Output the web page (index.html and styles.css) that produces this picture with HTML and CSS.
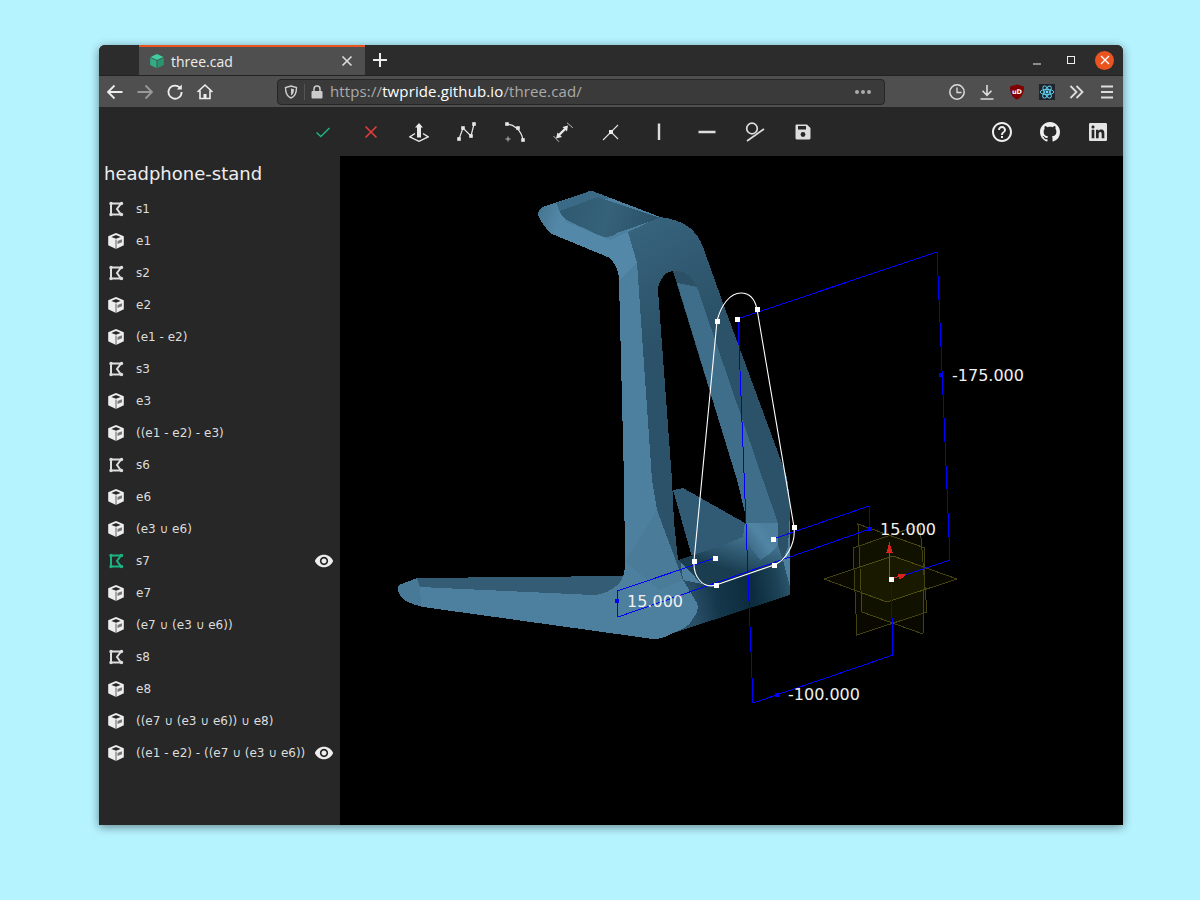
FILE: index.html
```html
<!DOCTYPE html>
<html lang="en">
<head>
<meta charset="utf-8">
<title>three.cad</title>
<link rel="stylesheet" href="styles.css">
</head>
<body>
<svg class="defs" width="0" height="0" aria-hidden="true">
  <symbol id="i-sketch" viewBox="0 0 16 16">
    <path d="M3 2.500H13L9 8L13 13.500H3Z" fill="none" stroke="currentColor" stroke-width="2"/>
    <g fill="currentColor"><circle cx="3" cy="2.500" r="1.700"/><circle cx="13.500" cy="2.500" r="1.700"/><circle cx="3" cy="13.500" r="1.700"/><circle cx="13.500" cy="13.500" r="1.700"/></g>
  </symbol>
  <symbol id="i-cube" viewBox="0 0 16 16">
    <path d="M8 0L15.800 3.200V12.300L8 16L.2 12.300V3.200Z" fill="#eee"/>
    <path d="M8 2L12.600 3.900L8 5.800L3.400 3.900Z" fill="#272727"/>
    <path d="M9.500 8L14 6.200V9.200L9.500 11Z" fill="#272727" opacity=".6"/>
    <path d="M8 6.600V16" stroke="#272727" stroke-width=".7"/>
  </symbol>
  <symbol id="i-eye" viewBox="0 0 24 24">
    <path fill="currentColor" d="M12 4.500C7 4.500 2.730 7.610 1 12c1.730 4.390 6 7.500 11 7.500s9.270-3.110 11-7.500c-1.730-4.390-6-7.500-11-7.500zM12 17c-2.760 0-5-2.240-5-5s2.240-5 5-5 5 2.240 5 5-2.240 5-5 5zm0-8c-1.660 0-3 1.340-3 3s1.340 3 3 3 3-1.340 3-3-1.340-3-3-3z"/>
  </symbol>
</svg>

<div class="window">
  <div class="titlebar">
    <div class="tab">
      <svg class="tab-icon" viewBox="0 0 14 14" width="14" height="14"><path d="M7 0L13.500 3L7 6L.5 3Z" fill="#3ccf9f"/><path d="M.2 3.800L6.500 6.800V14L.2 11Z" fill="#2fae86"/><path d="M13.800 3.800L7.500 6.800V14L13.800 11Z" fill="#27966f"/></svg>
      <span class="tab-title">three.cad</span>
      <svg class="tab-close" viewBox="0 0 12 12" width="12" height="12"><path d="M1.500 1.500L10.500 10.500M10.500 1.500L1.500 10.500" stroke="#ddd" stroke-width="1.600"/></svg>
    </div>
    <svg class="new-tab" viewBox="0 0 14 14" width="14" height="14"><path d="M7 0V14M0 7H14" stroke="#eee" stroke-width="2"/></svg>
    <div class="win-controls">
      <svg viewBox="0 0 10 10" width="10" height="10"><path d="M1 9H9" stroke="#eee" stroke-width="1"/></svg>
      <svg viewBox="0 0 10 10" width="10" height="10"><rect x="1.500" y="1.500" width="7" height="7" fill="none" stroke="#eee" stroke-width="1"/></svg>
      <span class="win-close"><svg viewBox="0 0 10 10" width="10" height="10"><path d="M1 1L9 9M9 1L1 9" stroke="#fff" stroke-width="1.300"/></svg></span>
    </div>
  </div>

  <div class="navbar">
    <div class="nav-left">
      <svg viewBox="0 0 18 18" width="18" height="18"><path d="M16.500 9H2.500M8.500 2.500L2 9L8.500 15.500" fill="none" stroke="#eee" stroke-width="1.800"/></svg>
      <svg viewBox="0 0 18 18" width="18" height="18"><path d="M1.500 9H15.500M9.500 2.500L16 9L9.500 15.500" fill="none" stroke="#999" stroke-width="1.800"/></svg>
      <svg viewBox="0 0 18 18" width="18" height="18"><path d="M14.300 5.200A6.600 6.600 0 1 0 15.600 9" fill="none" stroke="#eee" stroke-width="1.800"/><path d="M15.800 1.600V6.600H10.800Z" fill="#eee"/></svg>
      <svg viewBox="0 0 18 18" width="18" height="18"><path d="M1.500 9L9 2L16.500 9M4 7.500V15.500H14V7.500" fill="none" stroke="#eee" stroke-width="1.600"/><path d="M7.500 15.500V11H10.500V15.500Z" fill="#eee"/></svg>
    </div>
    <div class="urlbar">
      <svg class="shield" viewBox="0 0 14 14" width="14" height="14"><path d="M7 1L12.500 2.500C12.500 8 11 11.500 7 13C3 11.500 1.500 8 1.500 2.500Z" fill="none" stroke="#ccc" stroke-width="1.400"/><path d="M7 3.500L10 4.300C10 7.500 9 9.500 7 10.500Z" fill="#ccc"/></svg>
      <span class="url-sep"></span>
      <svg class="lock" viewBox="0 0 12 14" width="12" height="14"><path d="M3 6.500V4A3 3 0 0 1 9 4V6.500" fill="none" stroke="#ccc" stroke-width="1.500"/><rect x="0.5" y="6" width="11" height="7.500" rx="1" fill="#ccc"/></svg>
      <span class="url"><span class="dim">https://</span><span class="host">twpride.github.io</span><span class="dim">/three.cad/</span></span>
      <span class="url-dots"><i></i><i></i><i></i></span>
    </div>
    <div class="nav-right">
      <svg viewBox="0 0 18 18" width="18" height="18"><circle cx="9" cy="9" r="7.200" fill="none" stroke="#ddd" stroke-width="1.500"/><path d="M9 4.500V9.500H13.500" fill="none" stroke="#ddd" stroke-width="1.300"/></svg>
      <svg viewBox="0 0 18 18" width="18" height="18"><path d="M9 2V12M4.500 7.800L9 12.300L13.500 7.800M2.500 16H15.500" fill="none" stroke="#ddd" stroke-width="1.600"/></svg>
      <svg viewBox="0 0 18 18" width="18" height="18"><path d="M9 1.500L16 3.500C16 10 14 14.500 9 16.500C4 14.500 2 10 2 3.500Z" fill="#800000"/><text class="ub" x="9" y="10.500" text-anchor="middle">uD</text></svg>
      <svg viewBox="0 0 18 18" width="18" height="18"><rect width="16" height="16" x="1" y="1" fill="#20232a"/><g fill="none" stroke="#61dafb" stroke-width=".9"><ellipse cx="9" cy="9" rx="6.800" ry="2.600"/><ellipse cx="9" cy="9" rx="6.800" ry="2.600" transform="rotate(60 9 9)"/><ellipse cx="9" cy="9" rx="6.800" ry="2.600" transform="rotate(120 9 9)"/></g><circle cx="9" cy="9" r="1.400" fill="#61dafb"/></svg>
      <svg viewBox="0 0 18 18" width="18" height="18"><path d="M2.500 3L8.500 9L2.500 15M8.500 3L14.500 9L8.500 15" fill="none" stroke="#ddd" stroke-width="1.800"/></svg>
      <svg viewBox="0 0 18 18" width="18" height="18"><path d="M3 3.500H15M3 9H15M3 14.500H15" stroke="#ddd" stroke-width="1.800"/></svg>
    </div>
  </div>

  <div class="toolbar">
    <div class="tools">
      <svg viewBox="0 0 20 20" width="20" height="20"><path d="M3.500 10.500L7.800 14.500L16.500 6" fill="none" stroke="#19b482" stroke-width="1.500"/></svg>
      <svg viewBox="0 0 20 20" width="20" height="20"><path d="M4.500 4.500L15.500 15.500M15.500 4.500L4.500 15.500" stroke="#e23d3d" stroke-width="1.600"/></svg>
      <svg viewBox="0 0 20 20" width="20" height="20"><path d="M10 1L14 5.500H12V15.500H8V5.500H6Z" fill="#e8e8e8"/><path d="M6 11.500L.8 14.800L10 19.300L19.200 14.800L14 11.500" fill="none" stroke="#e8e8e8" stroke-width="1.400"/></svg>
      <svg viewBox="0 0 20 20" width="20" height="20"><path d="M2 17L6 6L14 14L17 2" fill="none" stroke="#e8e8e8" stroke-width="1.200"/><g fill="#e8e8e8"><rect x=".2" y="15.200" width="3.600" height="3.600"/><rect x="4.200" y="4.200" width="3.600" height="3.600"/><rect x="12.200" y="12.200" width="3.600" height="3.600"/><rect x="15.200" y=".2" width="3.600" height="3.600"/></g></svg>
      <svg viewBox="0 0 20 20" width="20" height="20"><path d="M2 2C8 2.500 16 7 18 18" fill="none" stroke="#e8e8e8" stroke-width="1.200"/><g fill="#e8e8e8"><rect x=".2" y=".2" width="3.600" height="3.600"/><rect x="11.200" y="4.200" width="3.600" height="3.600"/><rect x="16.200" y="16.200" width="3.600" height="3.600"/></g><path d="M3 14.500V19.500M.5 17H5.500" stroke="#bbb" stroke-width="1"/></svg>
      <svg viewBox="0 0 20 20" width="20" height="20"><path d="M6 13L12 7" stroke="#e8e8e8" stroke-width="2.400"/><path d="M3 16.500L4.500 10.500L9 15ZM15 3.500L9.500 5L14 9.500Z" fill="#e8e8e8"/><path d="M.5 14L6 19.800M14 .8L19.800 5.800" stroke="#bbb" stroke-width="1"/></svg>
      <svg viewBox="0 0 20 20" width="20" height="20"><path d="M2 18L17 3M10 10L17 17" fill="none" stroke="#e0e0e0" stroke-width="1.100"/><rect x="8" y="8" width="4" height="4" fill="#eee"/></svg>
      <svg viewBox="0 0 20 20" width="20" height="20"><path d="M10 1.500V18" stroke="#ddd" stroke-width="2.400"/></svg>
      <svg viewBox="0 0 20 20" width="20" height="20"><path d="M1.500 10H18.500" stroke="#ddd" stroke-width="2.400"/></svg>
      <svg viewBox="0 0 22 20" width="22" height="20"><circle cx="8" cy="6.500" r="5.300" fill="none" stroke="#ddd" stroke-width="1.700"/><path d="M3 19L20 7" stroke="#ddd" stroke-width="1.700"/></svg>
      <svg viewBox="0 0 18 18" width="18" height="18"><path d="M2.500 1.500H13L16.500 5V15A1.500 1.500 0 0 1 15 16.500H3A1.500 1.500 0 0 1 1.500 15V2.500A1 1 0 0 1 2.500 1.500Z" fill="#ddd"/><rect x="4" y="3" width="8" height="3.500" fill="#272727"/><circle cx="9" cy="11.500" r="2.400" fill="#272727"/></svg>
    </div>
    <div class="links">
      <svg viewBox="0 0 24 24" width="24" height="24"><path fill="#eee" d="M11 18h2v-2h-2v2zm1-16C6.480 2 2 6.480 2 12s4.480 10 10 10 10-4.480 10-10S17.520 2 12 2zm0 18c-4.410 0-8-3.590-8-8s3.590-8 8-8 8 3.590 8 8-3.590 8-8 8zm0-14c-2.210 0-4 1.790-4 4h2c0-1.100.9-2 2-2s2 .9 2 2c0 2-3 1.750-3 5h2c0-2.250 3-2.500 3-5 0-2.210-1.790-4-4-4z"/></svg>
      <svg viewBox="0 0 16 16" width="20" height="20"><path fill="#eee" d="M8 0C3.580 0 0 3.580 0 8c0 3.540 2.290 6.530 5.470 7.590.4.070.55-.17.55-.38 0-.19-.01-.82-.01-1.490-2.010.37-2.530-.49-2.690-.94-.09-.23-.48-.94-.82-1.130-.28-.15-.68-.52-.01-.53.63-.01 1.080.58 1.230.82.72 1.210 1.870.87 2.330.66.07-.52.28-.87.51-1.070-1.780-.2-3.640-.89-3.640-3.950 0-.87.31-1.590.82-2.150-.08-.2-.36-1.020.08-2.120 0 0 .67-.21 2.200.82.64-.18 1.320-.27 2-.27.68 0 1.360.09 2 .27 1.530-1.040 2.200-.82 2.200-.82.44 1.100.16 1.920.08 2.120.51.56.82 1.270.82 2.150 0 3.070-1.870 3.750-3.650 3.950.29.25.54.73.54 1.480 0 1.070-.01 1.930-.01 2.200 0 .21.15.46.55.38A8.013 8.013 0 0016 8c0-4.420-3.580-8-8-8z"/></svg>
      <svg viewBox="0 0 24 24" width="18" height="18"><path fill="#e4e4e4" d="M20.447 20.452h-3.554v-5.569c0-1.328-.027-3.037-1.852-3.037-1.853 0-2.136 1.445-2.136 2.939v5.667H9.351V9h3.414v1.561h.046c.477-.9 1.637-1.850 3.370-1.850 3.601 0 4.267 2.370 4.267 5.455v6.286zM5.337 7.433c-1.144 0-2.063-.926-2.063-2.065 0-1.138.92-2.063 2.063-2.063 1.140 0 2.064.925 2.064 2.063 0 1.139-.925 2.065-2.064 2.065zm1.782 13.019H3.555V9h3.564v11.452zM22.225 0H1.771C.792 0 0 .774 0 1.729v20.542C0 23.227.792 24 1.771 24h20.451C23.200 24 24 23.227 24 22.271V1.729C24 .774 23.200 0 22.222 0h.003z"/></svg>
    </div>
  </div>

  <div class="main">
    <aside class="sidebar">
      <div class="project">headphone-stand</div>
      <ul class="tree">
        <li><svg class="ico"><use href="#i-sketch"/></svg><span>s1</span></li>
        <li><svg class="ico"><use href="#i-cube"/></svg><span>e1</span></li>
        <li><svg class="ico"><use href="#i-sketch"/></svg><span>s2</span></li>
        <li><svg class="ico"><use href="#i-cube"/></svg><span>e2</span></li>
        <li><svg class="ico"><use href="#i-cube"/></svg><span>(e1 - e2)</span></li>
        <li><svg class="ico"><use href="#i-sketch"/></svg><span>s3</span></li>
        <li><svg class="ico"><use href="#i-cube"/></svg><span>e3</span></li>
        <li><svg class="ico"><use href="#i-cube"/></svg><span>((e1 - e2) - e3)</span></li>
        <li><svg class="ico"><use href="#i-sketch"/></svg><span>s6</span></li>
        <li><svg class="ico"><use href="#i-cube"/></svg><span>e6</span></li>
        <li><svg class="ico"><use href="#i-cube"/></svg><span>(e3 ∪ e6)</span></li>
        <li><svg class="ico active"><use href="#i-sketch"/></svg><span>s7</span><svg class="eye"><use href="#i-eye"/></svg></li>
        <li><svg class="ico"><use href="#i-cube"/></svg><span>e7</span></li>
        <li><svg class="ico"><use href="#i-cube"/></svg><span>(e7 ∪ (e3 ∪ e6))</span></li>
        <li><svg class="ico"><use href="#i-sketch"/></svg><span>s8</span></li>
        <li><svg class="ico"><use href="#i-cube"/></svg><span>e8</span></li>
        <li><svg class="ico"><use href="#i-cube"/></svg><span>((e7 ∪ (e3 ∪ e6)) ∪ e8)</span></li>
        <li><svg class="ico"><use href="#i-cube"/></svg><span>((e1 - e2) - ((e7 ∪ (e3 ∪ e6))</span><svg class="eye"><use href="#i-eye"/></svg></li>
      </ul>
    </aside>

    <div class="viewport">
      <svg class="scene" viewBox="340 156 782 669" width="782" height="669">
        <defs>
          <linearGradient id="g-side" x1="690" y1="600" x2="792" y2="580" gradientUnits="userSpaceOnUse">
            <stop offset="0" stop-color="#2a5068"/><stop offset=".25" stop-color="#15374b"/><stop offset=".6" stop-color="#0c2b3d"/><stop offset=".85" stop-color="#1d4256"/><stop offset="1" stop-color="#2e5a73"/>
          </linearGradient>
          <linearGradient id="g-band" x1="735" y1="572" x2="745" y2="540" gradientUnits="userSpaceOnUse">
            <stop offset="0" stop-color="#1a3d50"/><stop offset="1" stop-color="#3f6f8b"/>
          </linearGradient>
          <linearGradient id="g-nose" x1="540" y1="212" x2="560" y2="218" gradientUnits="userSpaceOnUse">
            <stop offset="0" stop-color="#467792"/><stop offset="1" stop-color="#5488a8"/>
          </linearGradient>
          <linearGradient id="g-bulge" x1="738" y1="545" x2="765" y2="525" gradientUnits="userSpaceOnUse">
            <stop offset="0" stop-color="#33607a"/><stop offset=".7" stop-color="#5285a5"/><stop offset="1" stop-color="#4c7e9d"/>
          </linearGradient>
          <linearGradient id="g-pad" x1="565" y1="205" x2="650" y2="230" gradientUnits="userSpaceOnUse">
            <stop offset="0" stop-color="#2f5a72"/><stop offset=".5" stop-color="#356179"/><stop offset="1" stop-color="#2b5369"/>
          </linearGradient>
          <linearGradient id="g-top" x1="640" y1="215" x2="700" y2="320" gradientUnits="userSpaceOnUse">
            <stop offset="0" stop-color="#38647e"/><stop offset="1" stop-color="#2b5268"/>
          </linearGradient>
        </defs>

        <g class="model">
          <!-- silhouette -->
          <path fill="#4d7f9e" d="M538 215Q538 210 543 207L587 192Q591 190 595 192L663 218Q678 219 690 228Q699 236 703 247L723 303L787 477Q790 495 790 513L790 587V595L673 633Q660 640 653 639L423 607Q406 603 401 597Q396 590 399 585L417 578L623 576Q625 572 625 560L624 480L619 280Q619 268 610 258L552 234Q544 228 538 215Z"/>
          <!-- nose and pad -->
          <path fill="url(#g-nose)" d="M538 215Q538 210 543 207L558 202L566 222L610 240L628 232L637 263L619 280Q619 268 610 258L552 234Q544 228 538 215Z"/>
          <path fill="#3b6a87" d="M556 203L587 192Q591 190 595 192L610 198L560 212Z"/>
          <path fill="url(#g-pad)" d="M560 211L598 197L660 218L617 233Q612 237 605 237Q600 236 596 234L567 220Q561 216 560 211Z"/>
          <!-- dark top, inner leg and right wall -->
          <path fill="url(#g-top)" d="M628 232L660 217Q678 219 690 228Q699 236 703 247L723 303L787 477Q790 495 790 513L788 547L783 560L778 545L778 523L763 480L672 480L675 522L683 580L657 510L652 480L637 263Z"/>
          <!-- hole -->
          <path fill="#000" d="M673 271Q666 272 663 277Q658 283 658 290L672 480L674 522L678 560L692 557L673 490L683 488L745 523L745 513L737 480Z"/>
          <!-- diagonal band -->
          <path fill="#3f6e8a" d="M677 282L697 287L763 480L778 523L745 523L745 513L737 480Z"/>
          <path fill="#2c5065" d="M673 271Q685 270 691 278L697 287L677 283Z"/>
          <!-- bulge, gusset and lower bar -->
          <path fill="#315b74" d="M673 490L683 488L745 523L743 537L723 545L692 557Z"/>
          <path fill="url(#g-band)" d="M678 560L723 545L743 537L778 545L783 560L707 585Q698 583 695 577Z"/>
          <path fill="url(#g-bulge)" d="M745 523L778 523Q779 535 777 547Q770 555 760 560L743 537Z"/>
          <path fill="url(#g-side)" d="M673 633Q688 628 692 620Q700 610 697 603L683 580L707 585L783 560L790 587V595Z"/>
          <!-- foot top -->
          <path fill="#345c75" d="M417 578L623 576Q622 584 607 592Q600 595 593 595L420 587Z"/>
          <path fill="#487a97" d="M399 585L417 578L420 587L421 605L423 607Q406 603 401 597Q396 590 399 585Z"/>
          <path fill="#4a7c9a" d="M625 562L657 510L683 580L660 590Z"/>
        </g>

        <!-- datum planes -->
        <g class="plane">
          <path d="M824 579L893 556L957 579L887 602Z"/>
          <path d="M858 524L925 548L923 634L862 612Z"/>
          <path d="M853 548L920 525L927 612L857 635Z"/>
        </g>

        <!-- constraints -->
        <g class="dim">
          <path d="M737 319L937 252L950 560L905 575"/>
          <path d="M738 319L753 703L893 655L891 579"/>
          <path d="M715 558L617 591L618 617L870 529L869 506L773 539"/>
        </g>
        <g fill="#0000ff">
          <rect x="615" y="599" width="4" height="4"/>
          <rect x="868" y="527" width="4" height="4"/>
          <rect x="775" y="693" width="4" height="4"/>
          <rect x="939" y="373" width="4" height="4"/>
        </g>

        <!-- origin -->
        <g class="axis">
          <path d="M890 579L889.500 542" fill="none"/>
          <path d="M889.500 544L892 552H887Z"/>
          <path d="M891 579L906 574" fill="none"/>
          <path d="M906 574L898 574L900 579Z"/>
        </g>

        <!-- sketch -->
        <path class="sketch" d="M717 321C721 305 730 293 741 293C750 293 755 300 757 309L794 527C796 545 785 561 774 565L716 585C703 589 693 577 694 561Z"/>
        <g fill="#fff">
          <rect x="715" y="319" width="5" height="5"/>
          <rect x="735" y="317" width="5" height="5"/>
          <rect x="755" y="307" width="5" height="5"/>
          <rect x="792" y="525" width="5" height="5"/>
          <rect x="771" y="537" width="5" height="5"/>
          <rect x="772" y="563" width="5" height="5"/>
          <rect x="714" y="583" width="5" height="5"/>
          <rect x="713" y="556" width="5" height="5"/>
          <rect x="692" y="559" width="5" height="5"/>
          <rect x="889" y="577" width="5" height="5"/>
        </g>

        <g class="dim-label">
          <text x="952" y="381">-175.000</text>
          <text x="880" y="535">15.000</text>
          <text x="627" y="607">15.000</text>
          <text x="788" y="700">-100.000</text>
        </g>
      </svg>
    </div>
  </div>
</div>
</body>
</html>
```
FILE: styles.css
```css
* { box-sizing: border-box; }
html, body { margin: 0; height: 100%; }
body {
  background: #b5f3ff;
  padding: 45px 0 0 99px;
  font-family: "DejaVu Sans", sans-serif;
  overflow: hidden;
}
.defs { position: absolute; }

.window {
  width: 1024px;
  height: 780px;
  border-radius: 6px 6px 0 0;
  overflow: hidden;
  display: flex;
  flex-direction: column;
  background: #272727;
  box-shadow: 0 2px 10px rgba(0, 0, 0, .45);
}

.titlebar {
  height: 30px;
  flex: none;
  display: flex;
  align-items: center;
  background: #2c2c2c;
  padding-left: 40px;
}
.tab {
  width: 226px;
  height: 30px;
  display: flex;
  align-items: center;
  padding: 0 12px 0 11px;
  background: #4f4f4f;
  border-top: 2px solid #e95420;
  color: #eee;
  font: 14px "Open Sans", sans-serif;
}
.tab-icon { margin-right: 7px; }
.tab-title { flex: 1; }
.new-tab { margin-left: 8px; }
.win-controls {
  margin-left: auto;
  display: flex;
  align-items: center;
  gap: 24px;
  padding-right: 9px;
}
.win-close {
  width: 19px;
  height: 19px;
  margin-left: -5px;
  border-radius: 50%;
  background: #e95420;
  display: flex;
  align-items: center;
  justify-content: center;
}

.navbar {
  height: 32px;
  flex: none;
  display: flex;
  align-items: center;
  background: #4f4f4f;
  border-top: 1px solid #222;
}
.nav-left {
  width: 178px;
  display: flex;
  justify-content: flex-start;
  gap: 12px;
  padding-left: 7px;
}
.urlbar {
  width: 608px;
  height: 26px;
  display: flex;
  align-items: center;
  background: #3a3a3a;
  border: 1px solid #262626;
  border-radius: 4px;
  padding: 0 13px 0 6px;
}
.url-sep { width: 1px; height: 16px; background: #555; margin: 0 6px 0 6px; }
.lock { margin-right: 7px; }
.url {
  font: 15px/20px "Open Sans", sans-serif;
  letter-spacing: .12px;
  white-space: nowrap;
  margin-top: -2px;
}
.dim { color: #aaa; }
.host { color: #fff; }
.url-dots { margin-left: auto; display: flex; gap: 2px; }
.url-dots i { width: 4px; height: 4px; border-radius: 50%; background: #aaa; }
.nav-right {
  display: flex;
  gap: 12px;
  padding-left: 63px;
}
.ub { font: bold 6.500px "DejaVu Sans", sans-serif; fill: #fff; }

.toolbar {
  height: 49px;
  flex: none;
  display: flex;
  align-items: center;
  background: #272727;
  padding-left: 200px;
}
.tools, .links { display: flex; align-items: center; }
.tools > svg { display: block; flex: none; margin: 0 14px; }
.tools > svg:nth-child(10) { margin: 0 13px; }
.tools > svg:nth-child(11) { margin: 0 15px; }
.links { margin-left: auto; padding-right: 16px; }
.links > svg { display: block; flex: none; }
.links > svg:nth-child(1) { margin-right: 26px; }
.links > svg:nth-child(2) { margin-right: 29px; }

.main { flex: 1; display: flex; min-height: 0; }
.sidebar {
  width: 241px;
  flex: none;
  background: #272727;
  color: #ddd;
}
.project {
  height: 37px;
  padding: 6px 0 0 5px;
  font-size: 18px;
  line-height: 24px;
  color: #eee;
}
.tree { list-style: none; margin: 0; padding: 0; }
.tree li {
  height: 32px;
  display: flex;
  align-items: center;
  padding: 0 6px 0 9px;
  font-size: 12px;
  white-space: nowrap;
}
.ico { width: 16px; height: 16px; flex: none; margin-right: 12px; color: #ddd; }
.ico.active { color: #19b482; }
.eye { width: 20px; height: 20px; margin-left: auto; color: #eee; flex: none; }

.viewport { flex: 1; background: #000; overflow: hidden; }
.scene { display: block; }
.model path { shape-rendering: crispEdges; }
.plane path { fill: rgba(255, 255, 0, .035); stroke: #42410f; stroke-width: 1; shape-rendering: crispEdges; }
.dim path { fill: none; stroke: #0000ff; stroke-width: 1; shape-rendering: crispEdges; }
.axis path { fill: #d8231f; stroke: #d8231f; shape-rendering: crispEdges; }
.sketch { fill: none; stroke: #fff; stroke-width: 1.100; }
.dim-label text { font: 16px "DejaVu Sans", sans-serif; fill: #f0f0f0; }
```
